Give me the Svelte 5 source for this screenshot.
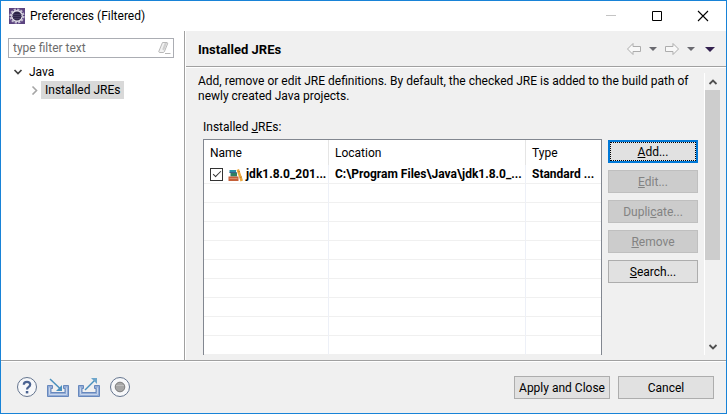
<script lang="ts">
	type Jre = { name: string; location: string; type: string; checked: boolean };
	type Action = { before: string; key: string; after: string; disabled?: boolean };

	let filter = $state('');
	let jres = $state<Jre[]>([
		{
			name: 'jdk1.8.0_201...',
			location: 'C:\\Program Files\\Java\\jdk1.8.0_...',
			type: 'Standard ...',
			checked: true
		}
	]);

	const actions: Action[] = [
		{ before: '', key: 'A', after: 'dd...' },
		{ before: '', key: 'E', after: 'dit...', disabled: true },
		{ before: 'Dupli', key: 'c', after: 'ate...', disabled: true },
		{ before: '', key: 'R', after: 'emove', disabled: true },
		{ before: '', key: 'S', after: 'earch...' }
	];

	const visibleRows = 10;
	let emptyRows = $derived(Math.max(0, visibleRows - jres.length));
</script>

<div class="window">
	<header class="titlebar">
		<svg class="app-icon" width="16" height="16" viewBox="0 0 16 16">
			<rect width="16" height="16" fill="#5c4480" />
			<circle cx="8" cy="8" r="6.6" fill="none" stroke="#c3bdd0" stroke-width="2" stroke-dasharray="2.2 1.25" />
			<circle cx="8" cy="8" r="5.2" fill="#2c2448" stroke="#e4e1ea" stroke-width="1.4" />
			<path d="M3.5 6.5h9M3.2 8.5h9.6M4 10.5h8" stroke="#4b4368" stroke-width="0.8" />
		</svg>
		<span class="title">Preferences (Filtered)</span>
		<div class="window-controls">
			<button aria-label="Minimize" disabled>
				<svg width="12" height="12" viewBox="0 0 12 12"><path d="M1 5.5h10" stroke="#c4c4c4" /></svg>
			</button>
			<button aria-label="Maximize">
				<svg width="12" height="12" viewBox="0 0 12 12"><path d="M1.5 1.5h9v9h-9z" fill="none" stroke="#000" /></svg>
			</button>
			<button aria-label="Close">
				<svg width="12" height="12" viewBox="0 0 12 12"><path d="M1 1l10 10M11 1L1 11" stroke="#000" stroke-width="1.1" /></svg>
			</button>
		</div>
	</header>

	<div class="body">
		<nav class="sidebar">
			<div class="filter">
				<input type="text" aria-label="Filter" placeholder="type filter text" bind:value={filter} />
				<button aria-label="Clear filter" onclick={() => (filter = '')}>
					<svg width="14" height="14" viewBox="0 0 14 14">
						<path d="M5.5 1.5h4.500q1 .3.600 1.300l-3.300 8q-.4.700-1.200.700H2.500q-1-.3-.6-1.300z" fill="#f2f2f2" stroke="#b8b8b8" />
						<path d="M5.200 8.200L7.700 2h2.300L7 9.500z" fill="#cfcfcf" />
						<path d="M8 12.500h5.500" stroke="#b8b8b8" />
					</svg>
				</button>
			</div>
			<ul class="tree">
				<li>
					<button>
						<svg width="10" height="10" viewBox="0 0 10 10"><path d="M1.500 3l3.500 3.500L8.500 3" fill="none" stroke="#404040" stroke-width="1.700" /></svg>
						<span>Java</span>
					</button>
					<ul>
						<li>
							<button>
								<svg width="10" height="10" viewBox="0 0 10 10"><path d="M3.500 1.500l4 4-4 4" fill="none" stroke="#a6a6a6" stroke-width="1.600" /></svg>
								<span class="selected">Installed JREs</span>
							</button>
						</li>
					</ul>
				</li>
			</ul>
		</nav>

		<main class="page">
			<div class="page-header">
				<h1>Installed JREs</h1>
				<div class="history">
					<button aria-label="Back">
						<svg width="16" height="14" viewBox="0 0 16 14"><path d="M1.500 7l5.500-5.500v3h7.500v5H7v3z" fill="#f8f8f8" stroke="#adadad" stroke-linejoin="round" /></svg>
					</button>
					<button aria-label="Back history">
						<svg width="8" height="6" viewBox="0 0 8 6"><path d="M0 1h8L4 5z" fill="#6a6a70" /></svg>
					</button>
					<button aria-label="Forward">
						<svg width="16" height="14" viewBox="0 0 16 14"><path d="M14.500 7L9 1.500v3H1.500v5H9v3z" fill="#f8f8f8" stroke="#adadad" stroke-linejoin="round" /></svg>
					</button>
					<button aria-label="Forward history">
						<svg width="8" height="6" viewBox="0 0 8 6"><path d="M0 1h8L4 5z" fill="#6a6a70" /></svg>
					</button>
					<button class="menu" aria-label="Menu">
						<svg width="10" height="6" viewBox="0 0 10 6"><path d="M0 1h10L5 6z" fill="#33204f" /></svg>
					</button>
				</div>
			</div>

			<div class="scroller">
				<div class="content">
					<p>
						Add, remove or edit JRE definitions. By default, the checked JRE is added to the build path of
						newly created Java projects.
					</p>
					<div class="label" id="jres-label">Installed <u>J</u>REs:</div>
					<div class="jres">
						<table aria-labelledby="jres-label">
							<colgroup>
								<col class="col-name" />
								<col class="col-location" />
								<col />
							</colgroup>
							<thead>
								<tr><th>Name</th><th>Location</th><th>Type</th></tr>
							</thead>
							<tbody>
								{#each jres as jre}
									<tr>
										<td class="name">
											<label>
												<input type="checkbox" bind:checked={jre.checked} />
												<svg width="16" height="14" viewBox="0 0 16 14">
													<path d="M1.500 2h6.500v2.500H1.500z" fill="#2b8fa8" />
													<path d="M2.500 4.500h6.500v4H2.500z" fill="#2f7f62" />
													<path d="M1.500 4h7v1h-7z" fill="#3a5f8a" />
													<path d="M.5 8.500h10V13H.5z" fill="#c5603a" />
													<path d="M1.500 10h8v1h-8z" fill="#dc8f68" />
													<path d="M8.500 2l2.500-1L15 12.500l-2.500 1z" fill="#eda83c" />
													<path d="M10 4l2-.7M12 9.500l2-.7" stroke="#b97822" stroke-width=".8" />
												</svg>
												<span>{jre.name}</span>
											</label>
										</td>
										<td>{jre.location}</td>
										<td>{jre.type}</td>
									</tr>
								{/each}
								{#each { length: emptyRows } as _}
									<tr><td></td><td></td><td></td></tr>
								{/each}
							</tbody>
						</table>
						<div class="actions">
							{#each actions as action, i}
								<button class="push" class:focused={i === 0} disabled={action.disabled}>
									{action.before}<u>{action.key}</u>{action.after}
								</button>
							{/each}
						</div>
					</div>
				</div>
				<div class="scrollbar">
					<button aria-label="Scroll up">
						<svg width="10" height="10" viewBox="0 0 10 10"><path d="M1.500 7L5 3.500 8.500 7" fill="none" stroke="#505050" stroke-width="1.800" /></svg>
					</button>
					<div class="track"><div class="thumb"></div></div>
					<button aria-label="Scroll down">
						<svg width="10" height="10" viewBox="0 0 10 10"><path d="M1.500 3L5 6.500 8.500 3" fill="none" stroke="#505050" stroke-width="1.800" /></svg>
					</button>
				</div>
			</div>
		</main>
	</div>

	<footer class="footer">
		<div class="tools">
			<button aria-label="Help">
				<svg width="22" height="22" viewBox="0 0 22 22">
					<circle cx="11" cy="10" r="9.500" fill="#f7f8fa" stroke="#65758f" />
					<path d="M7.800 7.800Q7.800 4.800 11 4.800q3.200 0 3.200 2.700 0 1.500-1.700 2.600Q11 11.200 11 12.600" fill="none" stroke="#4b6391" stroke-width="2.200" />
					<rect x="9.800" y="14" width="2.500" height="2.400" fill="#4b6391" />
				</svg>
			</button>
			<button aria-label="Import">
				<svg width="22" height="22" viewBox="0 0 22 22">
					<path d="M.5 8.500h5v3h-1.500v4h14v-4h-1.500v-3h5v11h-21z" fill="#92acd6" stroke="#6788bd" />
					<path d="M2.500 10.500v7h17v-7" fill="none" stroke="#c6d5ec" />
					<path d="M3 2l10 9.500" stroke="#4a90bd" stroke-width="1.500" />
					<path d="M15 14V8l-6 6z" fill="#4a90bd" />
				</svg>
			</button>
			<button aria-label="Export">
				<svg width="22" height="22" viewBox="0 0 22 22">
					<path d="M.5 8.500h5v3h-1.500v4h14v-4h-1.500v-3h5v11h-21z" fill="#92acd6" stroke="#6788bd" />
					<path d="M2.500 10.500v7h17v-7" fill="none" stroke="#c6d5ec" />
					<path d="M7 13L17 3" stroke="#4a90bd" stroke-width="1.500" />
					<path d="M19 1v6l-6-6z" fill="#6ea6cb" />
				</svg>
			</button>
			<button aria-label="Record">
				<svg width="22" height="22" viewBox="0 0 22 22">
					<circle cx="11" cy="10" r="9.500" fill="#f7f8fa" stroke="#65758f" />
					<circle cx="11" cy="10" r="4.800" fill="#a6a6a6" stroke="#7c7c7c" />
					<path d="M7 8.500h8" stroke="#bdbdbd" />
				</svg>
			</button>
		</div>
		<button class="push wide">Apply and Close</button>
		<button class="push wide">Cancel</button>
	</footer>
</div>

<style>
	:global(body) {
		margin: 0;
		background: #fff;
	}

	.window {
		box-sizing: border-box;
		display: flex;
		flex-direction: column;
		min-height: calc(100vh - 2px);
		border: 1px solid #1883d7;
		background: #f0f0f0;
		color: #000;
		font: 12px/15px Roboto, 'Open Sans', sans-serif;
	}

	button {
		padding: 0;
		border: 0;
		background: none;
		color: inherit;
		font: inherit;
	}

	svg {
		display: block;
		flex: none;
	}

	.titlebar {
		display: flex;
		align-items: center;
		gap: 5px;
		height: 30px;
		padding-left: 8px;
		background: #fff;
	}

	.title {
		flex: 1;
	}

	.window-controls {
		display: flex;
	}

	.window-controls button {
		display: grid;
		place-items: center;
		width: 46px;
		height: 28px;
	}

	.body {
		display: flex;
		flex: 1;
	}

	.sidebar {
		box-sizing: border-box;
		flex: none;
		width: 184px;
		padding: 7px 10px 0 7px;
		border-right: 1px solid #a0a0a0;
		background: #fff;
	}

	.filter {
		display: flex;
		align-items: center;
		height: 18px;
		padding-right: 2px;
		border: 1px solid #abadb3;
	}

	.filter input {
		flex: 1;
		min-width: 0;
		padding: 0 4px;
		border: 0;
		outline: 0;
		background: none;
		font: inherit;
	}

	.filter input::placeholder {
		color: #6d6d6d;
	}

	.tree,
	.tree ul {
		margin: 0;
		padding: 0;
		list-style: none;
	}

	.tree {
		padding: 5px 0 0 5px;
	}

	.tree ul {
		padding-left: 16px;
	}

	.tree button {
		display: flex;
		align-items: center;
		gap: 2px;
		height: 18px;
	}

	.tree span {
		padding: 2px 3px 1px 4px;
	}

	.tree .selected {
		background: #d9d9d9;
	}

	.page {
		display: flex;
		flex: 1;
		flex-direction: column;
		min-width: 0;
		border-left: 1px solid #fff;
	}

	.page-header {
		display: flex;
		align-items: center;
		justify-content: space-between;
		height: 35px;
		padding: 0 11px 0 12px;
		border-bottom: 1px solid #a0a0a0;
	}

	h1 {
		margin: 0;
		padding-top: 2px;
		font-size: 13px;
		line-height: 18px;
	}

	.history {
		display: flex;
		align-items: center;
		gap: 7px;
	}

	.menu {
		margin-left: 3px;
	}

	.scroller {
		display: flex;
		flex: 1;
		padding: 5px 6px 5px 12px;
		border-top: 1px solid #fff;
	}

	.content {
		flex: 1;
		min-width: 0;
	}

	p {
		margin: 0;
		padding-top: 1px;
	}

	.label {
		margin: 16px 0 4px 5px;
	}

	.jres {
		display: grid;
		grid-template-columns: 1fr 90px;
		align-items: start;
		gap: 6px;
		padding: 0 6px 0 5px;
	}

	table {
		width: 100%;
		border: 1px solid #828790;
		border-bottom: 0;
		border-spacing: 0;
		background: #fff;
		table-layout: fixed;
	}

	.col-name {
		width: 125px;
	}

	.col-location {
		width: 197px;
	}

	th,
	td {
		box-sizing: border-box;
		overflow: hidden;
		padding: 0 0 0 6px;
		border-right: 1px solid #e5e5e5;
		text-align: left;
		white-space: nowrap;
	}

	th {
		height: 25px;
		padding-top: 2px;
		font-weight: 400;
	}

	td {
		height: 19px;
		padding-top: 1px;
		border-right-color: #edf0f7;
		border-bottom: 1px solid #f0f0f0;
		font-weight: 700;
	}

	th:last-child,
	td:last-child {
		border-right: 0;
	}

	.name label {
		display: flex;
		align-items: center;
		gap: 2px;
	}

	.name input {
		box-sizing: border-box;
		display: grid;
		flex: none;
		place-items: center;
		width: 13px;
		height: 13px;
		margin: 0 3px 0 0;
		border: 1px solid #333;
		appearance: none;
	}

	.name input:checked::before {
		width: 7px;
		height: 3px;
		margin-bottom: 3px;
		border: solid #333;
		border-width: 0 0 1px 1px;
		content: '';
		transform: rotate(-45deg);
	}

	.actions {
		display: flex;
		flex-direction: column;
		gap: 7px;
		padding-top: 1px;
	}

	.push {
		box-sizing: border-box;
		height: 23px;
		padding-top: 2px;
		border: 1px solid #adadad;
		background: #e1e1e1;
	}

	.push:disabled {
		border-color: #bfbfbf;
		background: #ccc;
		color: #838383;
	}

	.push.focused {
		border: 2px solid #0078d7;
		outline: 1px dotted #000;
		outline-offset: -3px;
	}

	.push.wide {
		width: 96px;
	}

	.scrollbar {
		display: flex;
		flex: none;
		flex-direction: column;
		width: 15px;
		border-left: 1px solid #fff;
	}

	.scrollbar button {
		display: grid;
		place-items: center;
		height: 17px;
	}

	.track {
		flex: 1;
	}

	.thumb {
		height: 170px;
		background: #cdcdcd;
	}

	.footer {
		display: flex;
		align-items: center;
		gap: 8px;
		padding: 15px 12px 14px 15px;
		border-top: 1px solid #a0a0a0;
		box-shadow: inset 0 1px #fff;
	}

	.tools {
		display: flex;
		flex: 1;
		gap: 9px;
	}
</style>
